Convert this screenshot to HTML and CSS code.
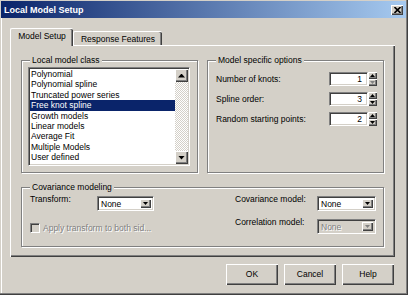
FILE: index.html
```html
<!DOCTYPE html>
<html lang="en">
<head>
    <meta charset="UTF-8">
    <title>Local Model Setup</title>
    <link rel="stylesheet" href="styles.css">
</head>
<body>
    <div class="window">
        <div class="titlebar">
            <span class="title">Local Model Setup</span>
            <div class="close">
                <svg width="7" height="6" viewBox="0 0 7 6">
                    <path d="M0.5 0 L6.5 6 M6.5 0 L0.5 6" stroke="#000" stroke-width="1.6"/>
                </svg>
            </div>
        </div>

        <div class="tabs">
            <div class="tab tab-active">Model Setup</div>
            <div class="tab tab-other">Response Features</div>
        </div>

        <div class="panel">
            <div class="top-row">
                <!-- local model list -->
                <div class="group">
                    <span class="group-title">Local model class</span>
                    <div class="listbox">
                        <div class="list">
                            <div class="item">Polynomial</div>
                            <div class="item">Polynomial spline</div>
                            <div class="item">Truncated power series</div>
                            <div class="item selected">Free knot spline</div>
                            <div class="item">Growth models</div>
                            <div class="item">Linear models</div>
                            <div class="item">Average Fit</div>
                            <div class="item">Multiple Models</div>
                            <div class="item">User defined</div>
                        </div>
                        <div class="scrollbar">
                            <div class="raised scroll-btn"><span class="tri-up"></span></div>
                            <div class="raised scroll-btn"><span class="tri-down"></span></div>
                        </div>
                    </div>
                </div>

                <!-- options -->
                <div class="group">
                    <span class="group-title">Model specific options</span>
                    <div class="options">
                        <div class="opt-row">
                            <span>Number of knots:</span>
                            <div class="spin">
                                <div class="sunken spin-field">1</div>
                                <div class="spin-arrows">
                                    <div class="raised spin-btn"><span class="tri-up"></span></div>
                                    <div class="raised spin-btn"><span class="tri-down grey"></span></div>
                                </div>
                            </div>
                        </div>
                        <div class="opt-row">
                            <span>Spline order:</span>
                            <div class="spin">
                                <div class="sunken spin-field">3</div>
                                <div class="spin-arrows">
                                    <div class="raised spin-btn"><span class="tri-up"></span></div>
                                    <div class="raised spin-btn"><span class="tri-down"></span></div>
                                </div>
                            </div>
                        </div>
                        <div class="opt-row">
                            <span>Random starting points:</span>
                            <div class="spin">
                                <div class="sunken spin-field">2</div>
                                <div class="spin-arrows">
                                    <div class="raised spin-btn"><span class="tri-up"></span></div>
                                    <div class="raised spin-btn"><span class="tri-down"></span></div>
                                </div>
                            </div>
                        </div>
                    </div>
                </div>
            </div>

            <!-- covariance -->
            <div class="group group-cov">
                <span class="group-title">Covariance modeling</span>
                <div class="cov">
                    <span class="cov-label">Transform:</span>
                    <div class="sunken select">
                        <span class="select-text">None</span>
                        <div class="raised select-btn"><span class="tri-down small"></span></div>
                    </div>
                    <span></span>
                    <span class="cov-label">Covariance model:</span>
                    <div class="sunken select">
                        <span class="select-text">None</span>
                        <div class="raised select-btn"><span class="tri-down small"></span></div>
                    </div>

                    <div class="check-row">
                        <span class="sunken checkbox"></span>
                        <span class="disabled">Apply transform to both sid...</span>
                    </div>
                    <span class="cov-label">Correlation model:</span>
                    <div class="sunken select select-off">
                        <span class="select-text disabled">None</span>
                        <div class="raised select-btn"><span class="tri-down small grey"></span></div>
                    </div>
                </div>
            </div>
        </div>

        <div class="buttons">
            <div class="raised btn">OK</div>
            <div class="raised btn">Cancel</div>
            <div class="raised btn">Help</div>
        </div>
    </div>
</body>
</html>
```

FILE: styles.css
```css
body{
    margin: 0;
    background-color: #d4d0c8;
    font-family: "Liberation Sans", Arial, sans-serif;
    font-size: 8.5px;
    color: #000;
}
.window{
    width: 408px;
    height: 295px;
    box-sizing: border-box;
    background-color: #d4d0c8;
    box-shadow: inset -1px -1px #404040, inset -2px -2px #808080, inset 1px 1px #d4d0c8, inset 2px 2px #fff;
    display: flex;
    flex-direction: column;
}
.titlebar{
    margin: 1px 2px 0 1px;
    height: 17px;
    padding: 0 3px;
    background: linear-gradient(to right, #0a246a, #a6caf0);
    display: flex;
    align-items: center;
    justify-content: space-between;
}
.title{
    color: #fff;
    font-weight: bold;
    font-size: 9px;
}
.close{
    width: 12px;
    height: 10px;
    background-color: #d4d0c8;
    box-shadow: inset 1px 1px #fff, inset -1px -1px #404040, inset -2px -2px #808080;
    display: flex;
    align-items: center;
    justify-content: center;
}

/* tabs */
.tabs{
    display: flex;
    align-items: flex-end;
    height: 17px;
    margin: 10px 0 0 10px;
    position: relative;
    z-index: 1;
}
.tab{
    box-sizing: border-box;
    background-color: #d4d0c8;
    border-top: 1px solid #fff;
    border-left: 1px solid #fff;
    border-radius: 2px 2px 0 0;
    box-shadow: inset -1px 0 #404040, inset -2px 0 #808080;
    text-align: center;
}
.tab-active{
    width: 63px;
    height: 18px;
    margin-bottom: -1px;
    padding-top: 2px;
}
.tab-other{
    width: 89px;
    height: 14px;
    padding-top: 2px;
}

/* panel */
.panel{
    box-sizing: border-box;
    width: 385px;
    height: 212px;
    margin-left: 10px;
    border-top: 1px solid #fff;
    border-left: 1px solid #fff;
    box-shadow: inset -1px -1px #404040, inset -2px -2px #808080;
    padding: 14px 0 0 10px;
}
.top-row{
    display: flex;
    gap: 9px;
}
.group{
    position: relative;
    box-sizing: border-box;
    width: 177px;
    height: 113px;
    border: 1px solid #808080;
    box-shadow: inset 1px 1px #fff, 1px 1px #fff;
}
.group-title{
    position: absolute;
    top: -6px;
    left: 8px;
    padding: 0 2px;
    line-height: 10px;
    background-color: #d4d0c8;
}
.group-cov{
    width: 363px;
    height: 60px;
    margin-top: 14px;
}

.sunken{
    box-sizing: border-box;
    border: 1px solid;
    border-color: #808080 #fff #fff #808080;
    box-shadow: inset 1px 1px #404040, inset -1px -1px #d4d0c8;
    background-color: #fff;
}
.raised{
    box-sizing: border-box;
    background-color: #d4d0c8;
    box-shadow: inset 1px 1px #fff, inset -1px -1px #404040, inset -2px -2px #808080;
}

/* listbox */
.listbox{
    box-sizing: border-box;
    width: 162px;
    height: 99px;
    margin: 6px 0 0 6px;
    border: 1px solid;
    border-color: #808080 #fff #fff #808080;
    box-shadow: inset 1px 1px #404040, inset -1px -1px #d4d0c8;
    background-color: #fff;
    padding: 1px;
    display: flex;
}
.list{
    flex: 1;
}
.item{
    height: 10.4px;
    line-height: 10.4px;
    padding-left: 1px;
    white-space: nowrap;
}
.selected{
    background-color: #0a246a;
    color: #fff;
}
.scrollbar{
    width: 13px;
    display: flex;
    flex-direction: column;
    justify-content: space-between;
    background: repeating-conic-gradient(#fff 0 25%, #d4d0c8 0 50%) 0 0 / 2px 2px;
}
.scroll-btn{
    height: 13px;
    display: flex;
    align-items: center;
    justify-content: center;
}
.tri-up, .tri-down{
    display: block;
    width: 7px;
    height: 4px;
    background-color: #000;
}
.tri-up{
    clip-path: polygon(50% 0, 100% 100%, 0 100%);
}
.tri-down{
    clip-path: polygon(0 0, 100% 0, 50% 100%);
}
.small{
    width: 5px;
    height: 3px;
}
.grey{
    background-color: #808080;
}

/* options */
.options{
    padding: 11px 6px 0 8px;
    display: flex;
    flex-direction: column;
    gap: 6px;
}
.opt-row{
    height: 14px;
    display: flex;
    align-items: center;
    justify-content: space-between;
}
.spin{
    display: flex;
}
.spin-field{
    width: 39px;
    height: 14px;
    line-height: 12px;
    text-align: right;
    padding-right: 5px;
}
.spin-arrows{
    width: 9px;
    display: flex;
    flex-direction: column;
}
.spin-btn{
    height: 7px;
    display: flex;
    align-items: center;
    justify-content: center;
}
.spin-btn .tri-up, .spin-btn .tri-down{
    width: 5px;
    height: 3px;
}

/* covariance */
.cov{
    display: grid;
    grid-template-columns: 67px 57px 1fr 82px 59px;
    grid-template-rows: 15px 15px;
    row-gap: 8px;
    padding: 8px 7px 0 8px;
}
.cov-label{
    align-self: start;
    line-height: 7px;
}
.select{
    display: flex;
    padding: 2px;
}
.select-text{
    flex: 1;
    line-height: 11px;
    padding-left: 1px;
}
.select-btn{
    width: 11px;
    display: flex;
    align-items: center;
    justify-content: center;
}
.select-off{
    background-color: #d4d0c8;
}
.check-row{
    grid-column: 1 / 4;
    display: flex;
    align-items: center;
    gap: 3px;
    padding-top: 2px;
}
.checkbox{
    width: 10px;
    height: 10px;
    background-color: #d4d0c8;
}
.disabled{
    color: #808080;
    text-shadow: 1px 1px #fff;
}

/* buttons */
.buttons{
    display: flex;
    justify-content: flex-end;
    gap: 6px;
    margin: 7px 14px 0 0;
}
.btn{
    width: 52px;
    height: 21px;
    line-height: 21px;
    text-align: center;
}
```
